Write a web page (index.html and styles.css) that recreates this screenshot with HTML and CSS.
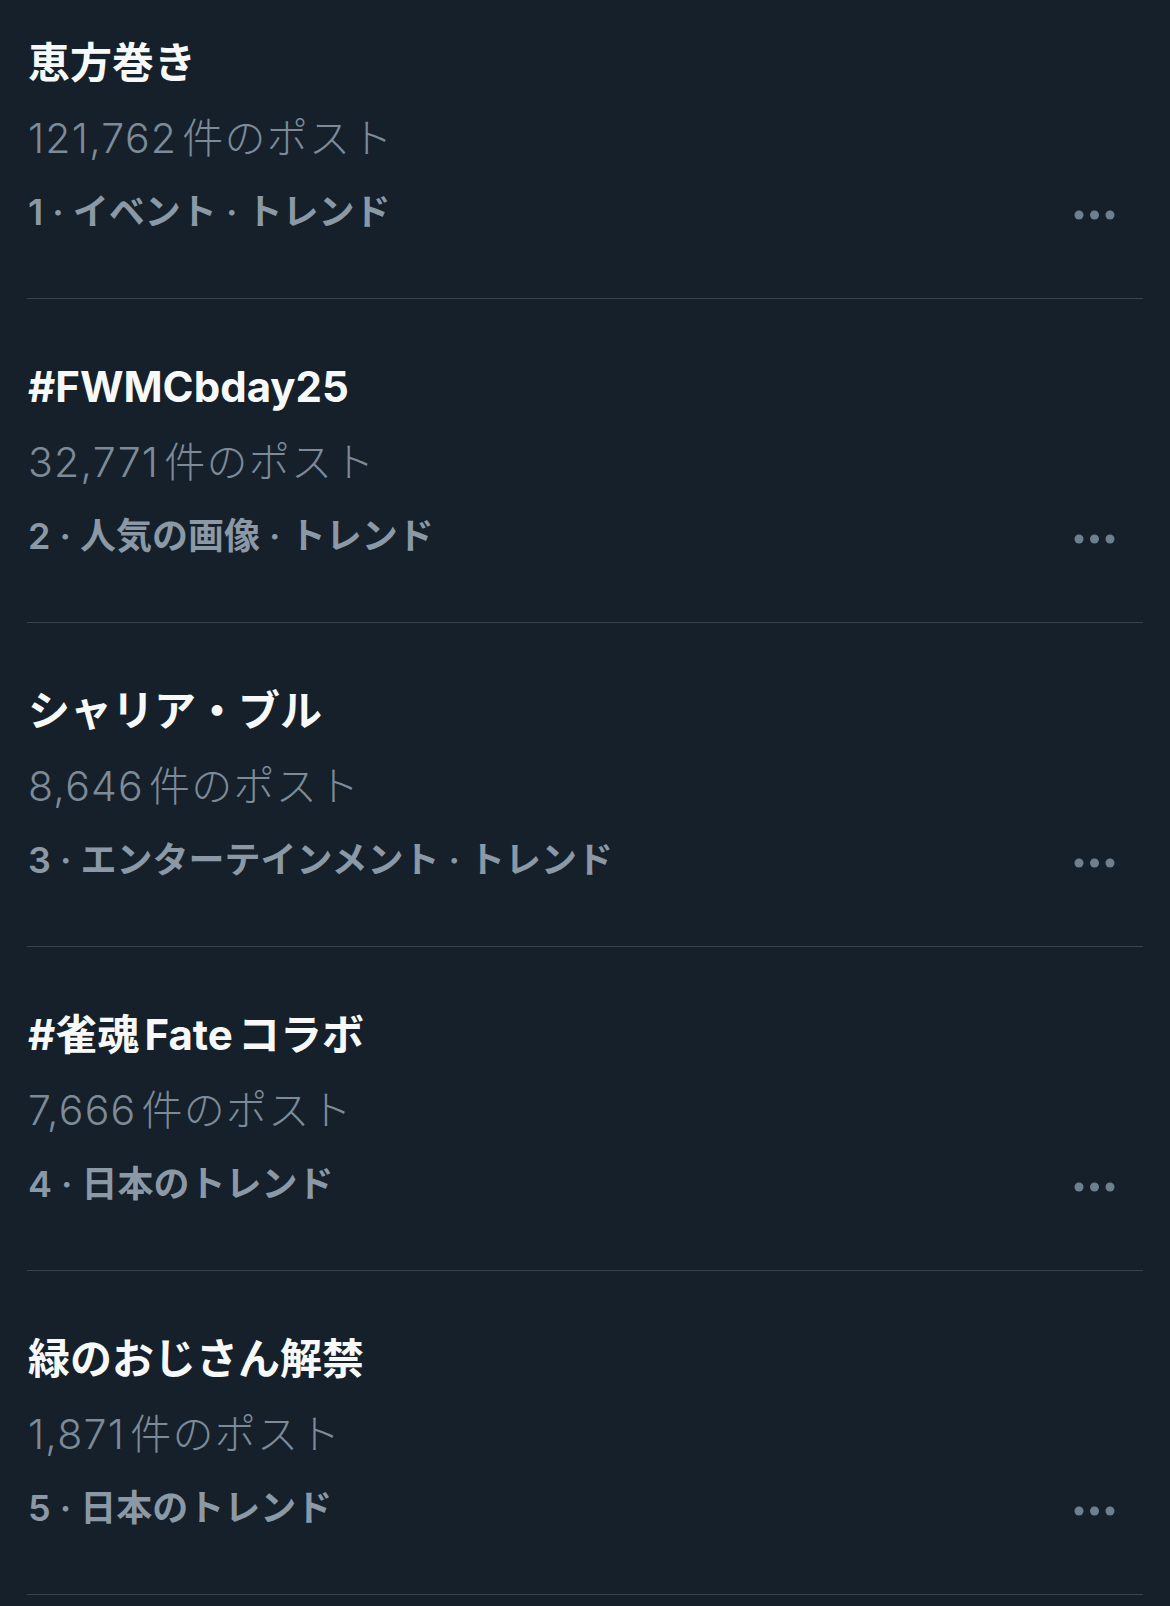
FILE: index.html
```html
<!DOCTYPE html>
<html lang="ja">
<head>
<meta charset="utf-8">
<title>トレンド</title>
<link rel="stylesheet" href="styles.css">
</head>
<body>
<main class="trends">
  <section class="trend">
    <div class="title">恵方巻き</div>
    <div class="count">121,762件のポスト</div>
    <div class="meta"><span>1 · イベント · トレンド</span><svg class="more" viewBox="0 0 42 40" width="42" height="40"><circle cx="5" cy="23" r="4.5"/><circle cx="20.5" cy="23" r="4.5"/><circle cx="36" cy="23" r="4.5"/></svg></div>
  </section>
  <section class="trend">
    <div class="title">#FWMCbday25</div>
    <div class="count">32,771件のポスト</div>
    <div class="meta"><span>2 · 人気の画像 · トレンド</span><svg class="more" viewBox="0 0 42 40" width="42" height="40"><circle cx="5" cy="23" r="4.5"/><circle cx="20.5" cy="23" r="4.5"/><circle cx="36" cy="23" r="4.5"/></svg></div>
  </section>
  <section class="trend">
    <div class="title">シャリア・ブル</div>
    <div class="count">8,646件のポスト</div>
    <div class="meta"><span>3 · エンターテインメント · トレンド</span><svg class="more" viewBox="0 0 42 40" width="42" height="40"><circle cx="5" cy="23" r="4.5"/><circle cx="20.5" cy="23" r="4.5"/><circle cx="36" cy="23" r="4.5"/></svg></div>
  </section>
  <section class="trend">
    <div class="title">#雀魂Fateコラボ</div>
    <div class="count">7,666件のポスト</div>
    <div class="meta"><span>4 · 日本のトレンド</span><svg class="more" viewBox="0 0 42 40" width="42" height="40"><circle cx="5" cy="23" r="4.5"/><circle cx="20.5" cy="23" r="4.5"/><circle cx="36" cy="23" r="4.5"/></svg></div>
  </section>
  <section class="trend">
    <div class="title">緑のおじさん解禁</div>
    <div class="count">1,871件のポスト</div>
    <div class="meta"><span>5 · 日本のトレンド</span><svg class="more" viewBox="0 0 42 40" width="42" height="40"><circle cx="5" cy="23" r="4.5"/><circle cx="20.5" cy="23" r="4.5"/><circle cx="36" cy="23" r="4.5"/></svg></div>
  </section>
</main>
</body>
</html>
```
FILE: styles.css
```css
html, body {
  margin: 0;
  padding: 0;
  background: #15202b;
}
body {
  font-family: Inter, "Noto Sans CJK JP", sans-serif;
  height: 1606px;
  overflow: hidden;
}
.trends {
  display: flex;
  flex-direction: column;
  margin: 0 27px;
}
.trend {
  display: flex;
  flex-direction: column;
  padding: 64px 0 66px;
  border-bottom: 1px solid #38444d;
}
.trend:first-child {
  padding-top: 39px;
}
.title {
  font-size: 42px;
  line-height: 48px;
  font-weight: 700;
  color: #f7f9f9;
  text-autospace: normal;
  margin-left: 1px;
}
.count {
  margin-top: 27px;
  font-size: 41px;
  line-height: 48px;
  font-weight: 300;
  color: #7d8b98;
  letter-spacing: 0.03em;
  text-autospace: normal;
  margin-left: 1px;
}
.meta {
  margin-top: 30px;
  display: flex;
  justify-content: space-between;
  align-items: flex-start;
  font-size: 36px;
  line-height: 40px;
  font-weight: 600;
  color: #8b98a5;
  margin-left: 1px;
}
.more {
  fill: #6e7f8e;
  flex: none;
  margin-right: 27px;
}
```
